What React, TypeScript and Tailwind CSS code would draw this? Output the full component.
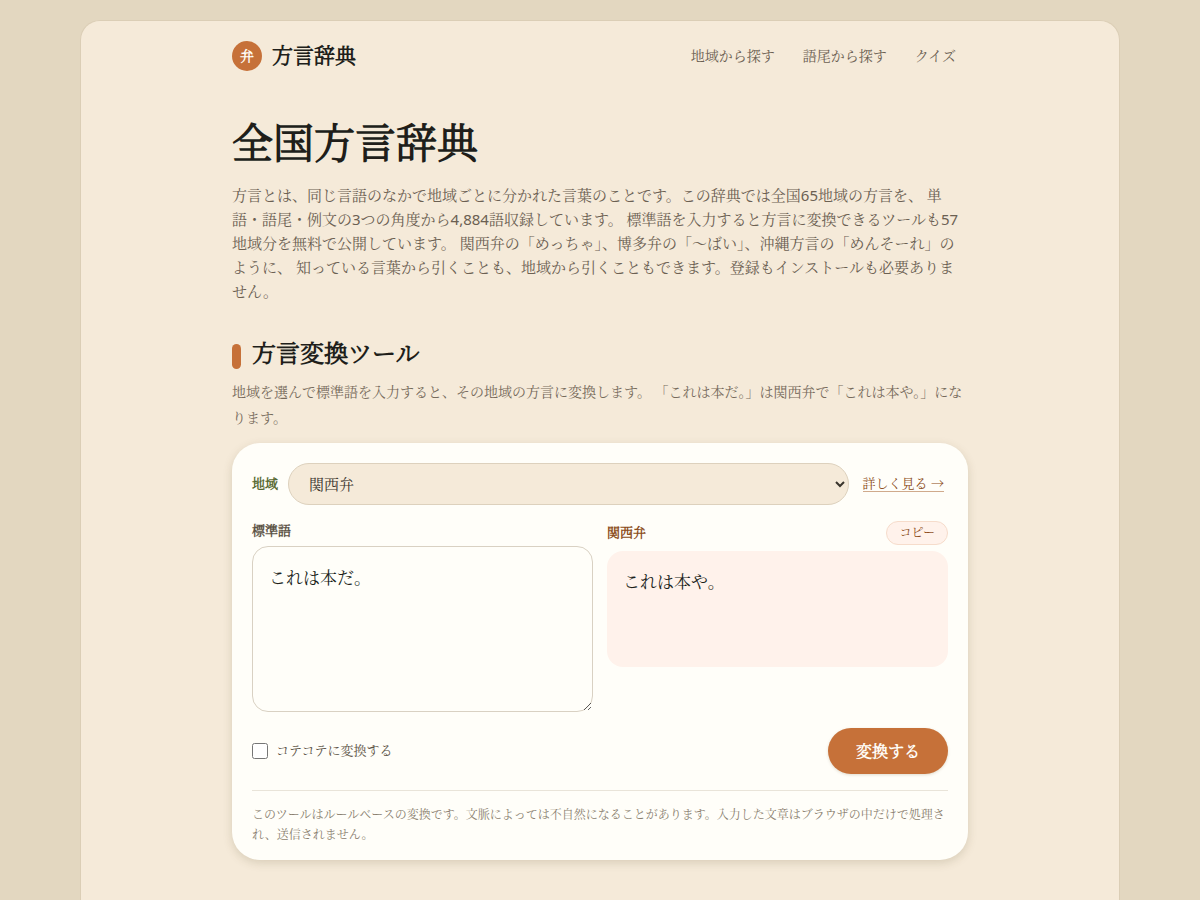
import { useState } from "react";

const NAV_ITEMS = ["地域から探す", "語尾から探す", "クイズ"];

const REGIONS = ["関西弁", "博多弁", "沖縄方言"];

const LEAD =
  "方言とは、同じ言語のなかで地域ごとに分かれた言葉のことです。この辞典では全国65地域の方言を、 単語・語尾・例文の3つの角度から4,884語収録しています。 標準語を入力すると方言に変換できるツールも57地域分を無料で公開しています。 関西弁の「めっちゃ」、博多弁の「〜ばい」、沖縄方言の「めんそーれ」のように、 知っている言葉から引くことも、地域から引くこともできます。登録もインストールも必要ありません。";

// The light cut has no bold of its own, so the browser thickens it evenly.
const HEAVY =
  "font-['Noto_Sans','Noto_Serif_CJK_JP_Light','Noto_Serif_CJK_JP',serif]";

function SiteHeader() {
  return (
    <header className="flex items-center justify-between py-5">
      <a href="#top" className={`flex items-center gap-2.5 ${HEAVY}`}>
        <span className="flex size-[30px] items-center justify-center rounded-full bg-[#c67139] text-sm font-bold text-[#fffdf8]">
          弁
        </span>
        <span className="pb-0.5 text-[21px] leading-7 font-semibold text-[#201e1a]">
          方言辞典
        </span>
      </a>
      <nav className="flex gap-7 pr-3 text-sm text-[#6b6052]">
        {NAV_ITEMS.map((item) => (
          <a key={item} href="#top">
            {item}
          </a>
        ))}
      </nav>
    </header>
  );
}

function Converter() {
  const [region, setRegion] = useState(REGIONS[0]);
  const [text, setText] = useState("これは本だ。");
  const [output, setOutput] = useState("これは本や。");

  const convert = () => setOutput(text.replace(/だ。/g, "や。"));

  return (
    <div className="mt-3 rounded-[28px] bg-[#fffef9] px-5 pt-5 pb-[15px] shadow-[0_3px_10px_rgba(90,75,40,0.18)]">
      <div className="flex items-center">
        <label
          htmlFor="region"
          className={`text-[13px] font-bold text-[#56682f] ${HEAVY}`}
        >
          地域
        </label>
        <select
          id="region"
          value={region}
          onChange={(e) => setRegion(e.target.value)}
          className="ml-2.5 h-[42px] min-w-0 flex-1 rounded-full border border-[#ddd1bd] bg-[#f5ead9] px-4 text-[15px] text-[#3a352d]"
        >
          {REGIONS.map((name) => (
            <option key={name}>{name}</option>
          ))}
        </select>
        <a
          href="#detail"
          className="mr-1 mb-0.5 ml-3.5 border-b border-[#d0aa8c] text-[13px] leading-4 text-[#8c4d20]"
        >
          詳しく見る →
        </a>
      </div>

      <div className="mt-4 grid grid-cols-2 items-start gap-3.5">
        <div className="flex flex-col gap-[7px]">
          <label
            htmlFor="source"
            className={`text-[13px] leading-[18px] font-bold text-[#5c5346] ${HEAVY}`}
          >
            標準語
          </label>
          <textarea
            id="source"
            value={text}
            onChange={(e) => setText(e.target.value)}
            className="h-[166px] w-full resize-y rounded-2xl border border-[#d9d1c3] bg-[#fffef9] px-4 py-4 text-[17px] leading-[30px] text-[#201e1a]"
          />
        </div>
        <div className="flex flex-col gap-1.5">
          <div className="flex items-center justify-between">
            <span className={`text-[13px] font-bold text-[#8c4d20] ${HEAVY}`}>
              {region}
            </span>
            <button
              type="button"
              onClick={() => navigator.clipboard?.writeText(output)}
              className="h-6 rounded-full border border-[#f6dccb] bg-[#fff2eb] px-3 text-xs text-[#8c4d20]"
            >
              コピー
            </button>
          </div>
          <output
            htmlFor="source"
            className="block min-h-[116px] rounded-2xl bg-[#fff2eb] px-4 py-4 text-[17px] leading-[30px] text-[#201e1a]"
          >
            {output}
          </output>
        </div>
      </div>

      <div className="mt-4 flex items-center justify-between">
        <label className="flex items-center gap-2 text-[13px] text-[#5c5346]">
          <input type="checkbox" className="size-4" />
          コテコテに変換する
        </label>
        <button
          type="button"
          onClick={convert}
          className={`h-[46px] rounded-full bg-[#c67139] px-7 text-base font-bold text-[#fffdf8] shadow-[0_1px_3px_rgba(110,85,40,0.2)] ${HEAVY}`}
        >
          変換する
        </button>
      </div>

      <p className="mt-4 border-t border-[#e9e4d9] pt-3.5 text-xs leading-5 text-[#8a7f6f]">
        このツールはルールベースの変換です。文脈によっては不自然になることがあります。入力した文章はブラウザの中だけで処理され、送信されません。
      </p>
    </div>
  );
}

export default function App() {
  return (
    <div
      lang="ja"
      className="flex min-h-screen flex-col bg-[#e3d7c0] px-5 pt-5 font-['Noto_Sans','Noto_Serif_CJK_JP',serif]"
    >
      <div
        id="top"
        className="mx-auto w-full max-w-[1040px] flex-1 rounded-t-[20px] border border-b-0 border-[#dbceb6] bg-[#f5ead9]"
      >
        <div className="mx-auto max-w-[768px] px-4 pb-10">
          <SiteHeader />
          <main>
            <h1
              className={`mt-6 text-[41px] leading-[54px] font-semibold text-[#201e1a] ${HEAVY}`}
            >
              全国方言辞典
            </h1>
            <p className="mt-3.5 text-[15px] leading-6 text-[#6b6052]">{LEAD}</p>

            <section>
              <h2
                className={`mt-8 flex items-center gap-[11px] text-2xl leading-9 font-semibold text-[#201e1a] ${HEAVY}`}
              >
                <span className="mt-1.5 h-[25px] w-[9px] rounded-full bg-[#c67139]" />
                方言変換ツール
              </h2>
              <p className="mt-2 text-sm leading-[26px] text-[#776b5c]">
                地域を選んで標準語を入力すると、その地域の方言に変換します。
                「これは本だ。」は関西弁で「これは本や。」になります。
              </p>
              <Converter />
            </section>
          </main>
        </div>
      </div>
    </div>
  );
}
